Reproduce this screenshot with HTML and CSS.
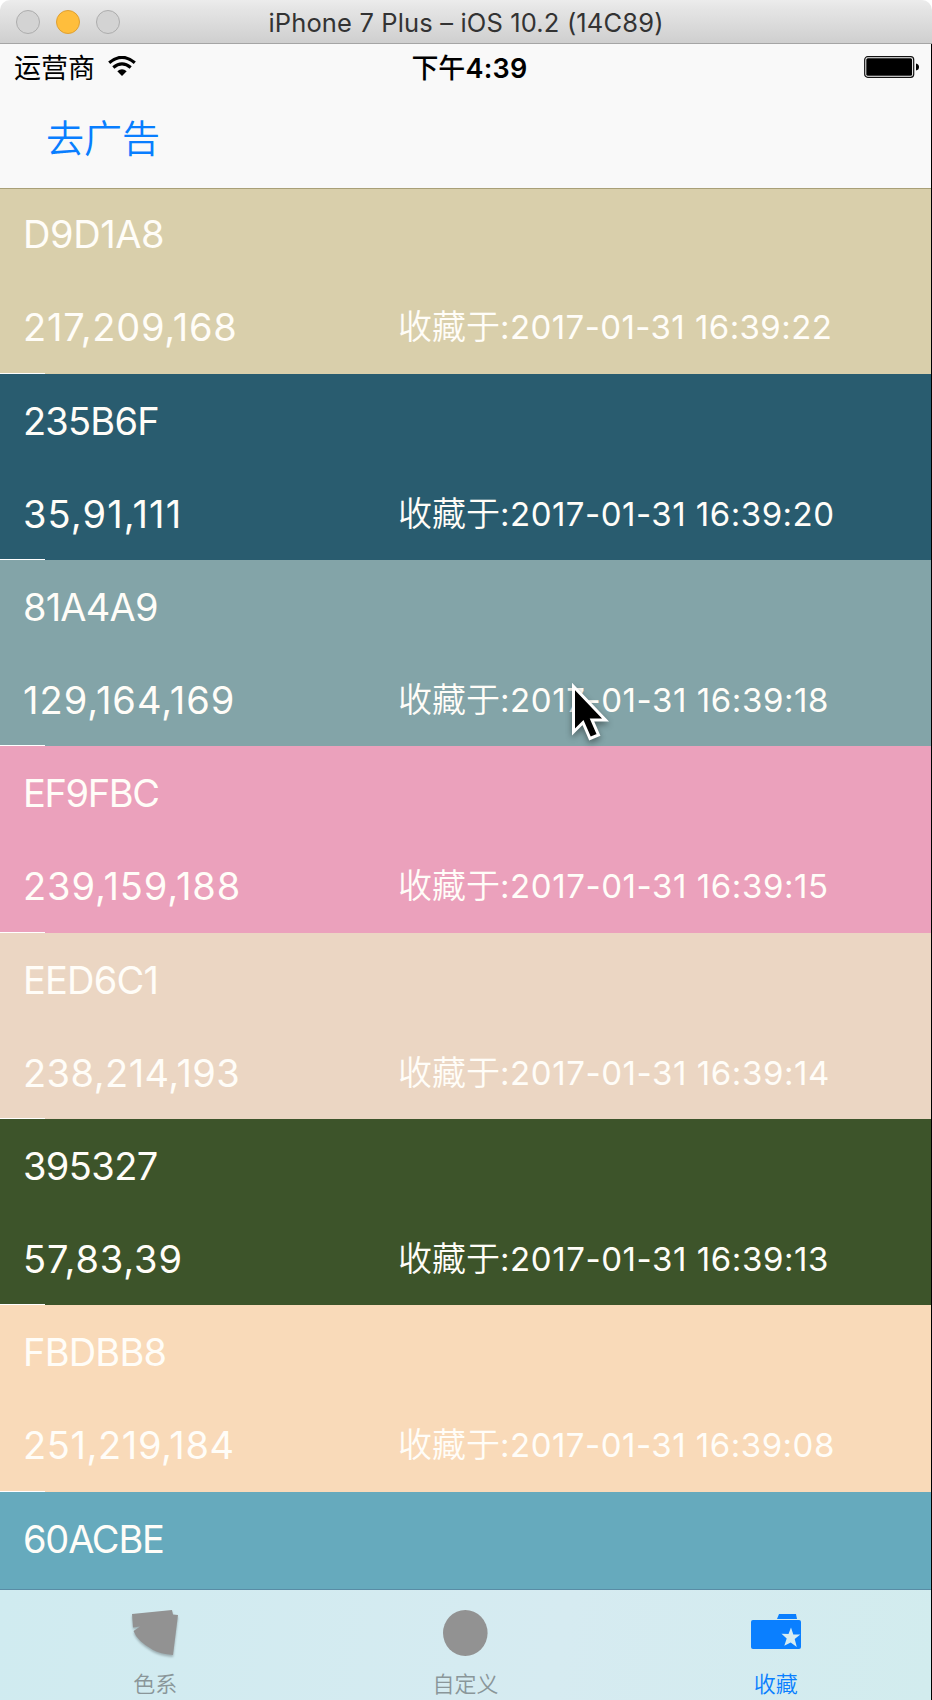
FILE: index.html
```html
<!DOCTYPE html>
<html lang="zh-CN">
<head>
<meta charset="utf-8">
<title>iPhone 7 Plus</title>
<link rel="stylesheet" href="styles.css">
</head>
<body>
<div class="window">
  <header class="titlebar">
    <div class="lights"><i class="light"></i><i class="light light-min"></i><i class="light"></i></div>
    <span class="title">iPhone 7 Plus – iOS 10.2 (14C89)</span>
  </header>
  <div class="screen">
    <div class="status">
      <div class="carrier"><span>运营商</span>
        <svg class="wifi" width="28" height="20" viewBox="0 0 28 20"><g fill="none" stroke="#000"><path d="M1.2 6.7Q14-4 26.8 6.7" stroke-width="3.2"/><path d="M5.3 11.5Q14 4.3 22.7 11.5" stroke-width="3.2"/></g><path d="M9.3 15.2Q14 11.4 18.7 15.2L14 20Z"/></svg>
      </div>
      <div class="time"><span>下午</span><b>4:39</b></div>
      <svg class="battery" width="56" height="22" viewBox="0 0 56 22"><rect x=".7" y=".7" width="49" height="20.6" rx="3" fill="none" stroke="#111" stroke-width="1.2"/><rect x="2.3" y="2.3" width="45.8" height="17.4" rx="1.5"/><path d="M52 7.5Q55 8 55 11T52 14.5Z"/></svg>
    </div>
    <nav class="navbar"><a class="nav-action">去广告</a></nav>
    <main class="list">
      <section class="row c1"><p class="hex">D9D1A8</p><div class="meta"><span class="rgb">217,209,168</span><span class="date"><span class="label">收藏于</span>:2017-01-31 16:39:22</span></div></section>
      <section class="row c2"><p class="hex">235B6F</p><div class="meta"><span class="rgb">35,91,111</span><span class="date"><span class="label">收藏于</span>:2017-01-31 16:39:20</span></div></section>
      <section class="row c3"><p class="hex">81A4A9</p><div class="meta"><span class="rgb">129,164,169</span><span class="date"><span class="label">收藏于</span>:2017-01-31 16:39:18</span></div></section>
      <section class="row c4"><p class="hex">EF9FBC</p><div class="meta"><span class="rgb">239,159,188</span><span class="date"><span class="label">收藏于</span>:2017-01-31 16:39:15</span></div></section>
      <section class="row c5"><p class="hex">EED6C1</p><div class="meta"><span class="rgb">238,214,193</span><span class="date"><span class="label">收藏于</span>:2017-01-31 16:39:14</span></div></section>
      <section class="row c6"><p class="hex">395327</p><div class="meta"><span class="rgb">57,83,39</span><span class="date"><span class="label">收藏于</span>:2017-01-31 16:39:13</span></div></section>
      <section class="row c7"><p class="hex">FBDBB8</p><div class="meta"><span class="rgb">251,219,184</span><span class="date"><span class="label">收藏于</span>:2017-01-31 16:39:08</span></div></section>
      <section class="row c8"><p class="hex">60ACBE</p></section>
    </main>
    <footer class="tabs">
      <div class="tab">
        <svg class="fan" width="48" height="48" viewBox="0 0 48 48"><path fill="#929292" d="M1 5 41 1 42 5.500 47 6 42 46Q29 45 22 41Q6 32 2.500 22L9 17.500 2 18.500Z"/></svg>
        <span>色系</span>
      </div>
      <div class="tab">
        <svg width="48" height="48" viewBox="0 0 48 48"><ellipse cx="24.300" cy="24" rx="22.300" ry="23" fill="#929292"/></svg>
        <span>自定义</span>
      </div>
      <div class="tab active">
        <svg width="50" height="48" viewBox="0 0 50 48"><g fill="#0a7fff"><path d="M26 10 28 5H45L46 10Z"/><rect x="0" y="11" width="50" height="29" rx="2"/></g><path fill="#d6ecf2" d="M40 18.500 42.300 25.500H49.300L43.700 30 45.800 38 39.700 33.400 33.300 36.800 35.700 29.400 30.500 24.800 37.500 25Z"/></svg>
        <span>收藏</span>
      </div>
    </footer>
  </div>
  <svg class="cursor" width="44" height="64" viewBox="0 0 44 64"><path d="M3.500 3.500V49L13 39.500 20 55.500 28.500 52 22 37H35.500Z" fill="#000" stroke="#fff" stroke-width="3"/></svg>
</div>
</body>
</html>
```

FILE: styles.css
```css
* { box-sizing: border-box; }
body { margin: 0; background: #fff; font-family: Inter, "Noto Sans CJK SC", sans-serif; }
p { margin: 0; }
svg { display: block; flex: none; }
.window { position: relative; width: 932px; height: 1700px; display: flex; flex-direction: column; overflow: hidden; }
.titlebar { height: 44px; flex: none; display: flex; align-items: center; justify-content: center; position: relative; background: linear-gradient(#ececec, #e5e5e5 20%, #cfcfcf); border-bottom: 1px solid #a5a5a5; border-radius: 10px 10px 0 0; }
.lights { position: absolute; left: 16px; top: 10px; display: flex; gap: 16px; }
.light { width: 24px; height: 24px; border-radius: 50%; background: #d3d3d3; border: 1px solid #adadad; }
.light-min { background: #ffbe3c; border-color: #dfa032; }
.title { font-size: 25.5px; line-height: 30px; color: #333; letter-spacing: 0.15px; padding-top: 2px; white-space: nowrap; }
.screen { flex: 1; min-height: 0; display: flex; flex-direction: column; border-right: 1px solid #000; background: #f9f9f9; }
.status { height: 46px; flex: none; display: grid; grid-template-columns: 1fr auto 1fr; align-items: center; padding: 0 11px 0 14px; color: #000; }
.carrier { display: flex; align-items: center; gap: 13px; font-size: 27px; line-height: 40px; }
.carrier span, .time { padding-top: 3px; }
.wifi { margin-top: -3px; }
.time { display: flex; align-items: center; font-size: 27px; line-height: 40px; padding-left: 5px; }
.time span { font-weight: 500; }
.time b { font-weight: 600; letter-spacing: 0.3px; }
.battery { justify-self: end; }
.navbar { height: 98px; flex: none; display: flex; align-items: center; padding: 0 0 6px 46px; }
.nav-action { font-size: 38px; line-height: 50px; color: #087eff; font-family: "Noto Sans CJK SC", sans-serif; font-weight: 350; }
.list { flex: 1; min-height: 0; overflow: hidden; border-top: 1px solid #a9a078; }
.row { height: 186.35px; color: #fffdf8; position: relative; }
.row:first-child { margin-top: -1.6px; }
.row::after { content: ""; position: absolute; left: 0; bottom: 0; width: 45px; height: 1px; background: #fff; }
.hex { height: 94px; line-height: 94px; padding-left: 23px; font-size: 38px; }
.meta { height: 92px; display: grid; grid-template-columns: 375px 1fr; padding-left: 23px; line-height: 93px; white-space: nowrap; }
.rgb { font-size: 38px; }
.date { font-size: 33px; letter-spacing: 0.58px; }
.label { font-size: 34px; line-height: 40px; font-weight: 350; letter-spacing: 0; }
.c1 { background: #d9cfab; }
.c2 { background: #295c6f; }
.c3 { background: #83a4a8; }
.c4 { background: #eba1bc; }
.c5 { background: #ebd6c3; }
.c6 { background: #3d542a; }
.c7 { background: #f9dab9; }
.c8 { background: #66aabd; }
.c1 .hex { letter-spacing: -0.4px; }
.c2 .hex, .c3 .hex, .c5 .hex, .c7 .hex { letter-spacing: -0.8px; }
.c4 .hex { letter-spacing: -1.4px; }
.c6 .hex { letter-spacing: -0.6px; }
.c8 .hex { letter-spacing: -1.2px; }
.c1 .rgb { letter-spacing: 0.75px; }
.c2 .rgb { letter-spacing: 1.1px; }
.c3 .rgb { letter-spacing: 1px; }
.c4 .rgb { letter-spacing: 0.9px; }
.c5 .rgb { letter-spacing: 0.45px; }
.c6 .rgb { letter-spacing: 0.85px; }
.c7 .rgb { letter-spacing: 0.6px; }
.c1 .date { letter-spacing: 0.42px; }
.c2 .date, .c7 .date { letter-spacing: 0.5px; }
.tabs { height: 111px; flex: none; display: grid; grid-template-columns: repeat(3, 1fr); background: linear-gradient(100deg, #d0ebf0, #d6ebf1 60%, #d2ecee); border-top: 1px solid #5a8ca5; }
.tab { display: flex; flex-direction: column; align-items: center; padding-top: 19px; font-size: 22px; line-height: 30px; color: #8a9699; font-weight: 350; gap: 12px; }
.active { color: #0a7fff; }
.fan { filter: drop-shadow(0 2px 1px rgba(0, 0, 0, .25)); }
.cursor { position: absolute; left: 570px; top: 683px; filter: drop-shadow(0 3px 3px rgba(0, 0, 0, .4)); }
```
